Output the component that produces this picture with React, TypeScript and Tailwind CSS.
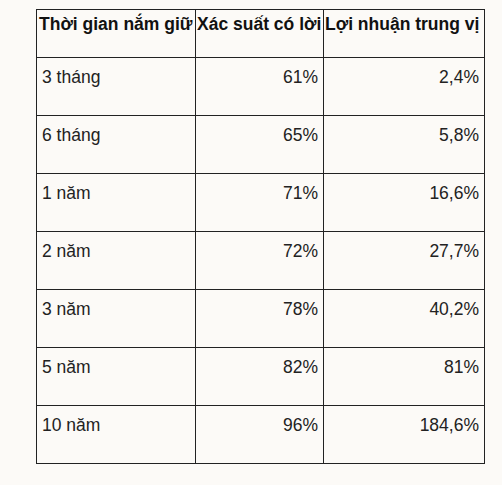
const rows: [string, string, string][] = [
  ["3 tháng", "61%", "2,4%"],
  ["6 tháng", "65%", "5,8%"],
  ["1 năm", "71%", "16,6%"],
  ["2 năm", "72%", "27,7%"],
  ["3 năm", "78%", "40,2%"],
  ["5 năm", "82%", "81%"],
  ["10 năm", "96%", "184,6%"],
];

export default function App() {
  return (
    <div className="min-h-[485px] w-[502px] bg-[#fcfaf7] pt-[9px] pl-[36px] font-['Liberation_Sans',Arial,sans-serif] text-[17.5px] text-[#222]">
      <table className="w-[448px] table-fixed border-collapse">
        <colgroup>
          <col className="w-[159px]" />
          <col className="w-[128px]" />
          <col className="w-[161px]" />
        </colgroup>
        <thead>
          <tr className="h-[48px]">
            <th className="overflow-hidden whitespace-nowrap border border-[#222] px-[2px] pt-[1px] text-left align-top font-bold text-[#111]">
              Thời gian nắm giữ
            </th>
            <th className="overflow-hidden whitespace-nowrap border border-[#222] px-[1px] pt-[1px] text-left align-top font-bold text-[#111]">
              Xác suất có lời
            </th>
            <th className="overflow-hidden whitespace-nowrap border border-[#222] px-[1px] pt-[1px] text-left align-top font-bold text-[#111]">
              Lợi nhuận trung vị
            </th>
          </tr>
        </thead>
        <tbody>
          {rows.map(([a, b, c]) => (
            <tr key={a} className="h-[58px]">
              <td className="border border-[#222] px-[5px] pt-[6px] align-top">{a}</td>
              <td className="border border-[#222] px-[5px] pt-[6px] text-right align-top">{b}</td>
              <td className="border border-[#222] px-[5px] pt-[6px] text-right align-top">{c}</td>
            </tr>
          ))}
        </tbody>
      </table>
    </div>
  );
}
